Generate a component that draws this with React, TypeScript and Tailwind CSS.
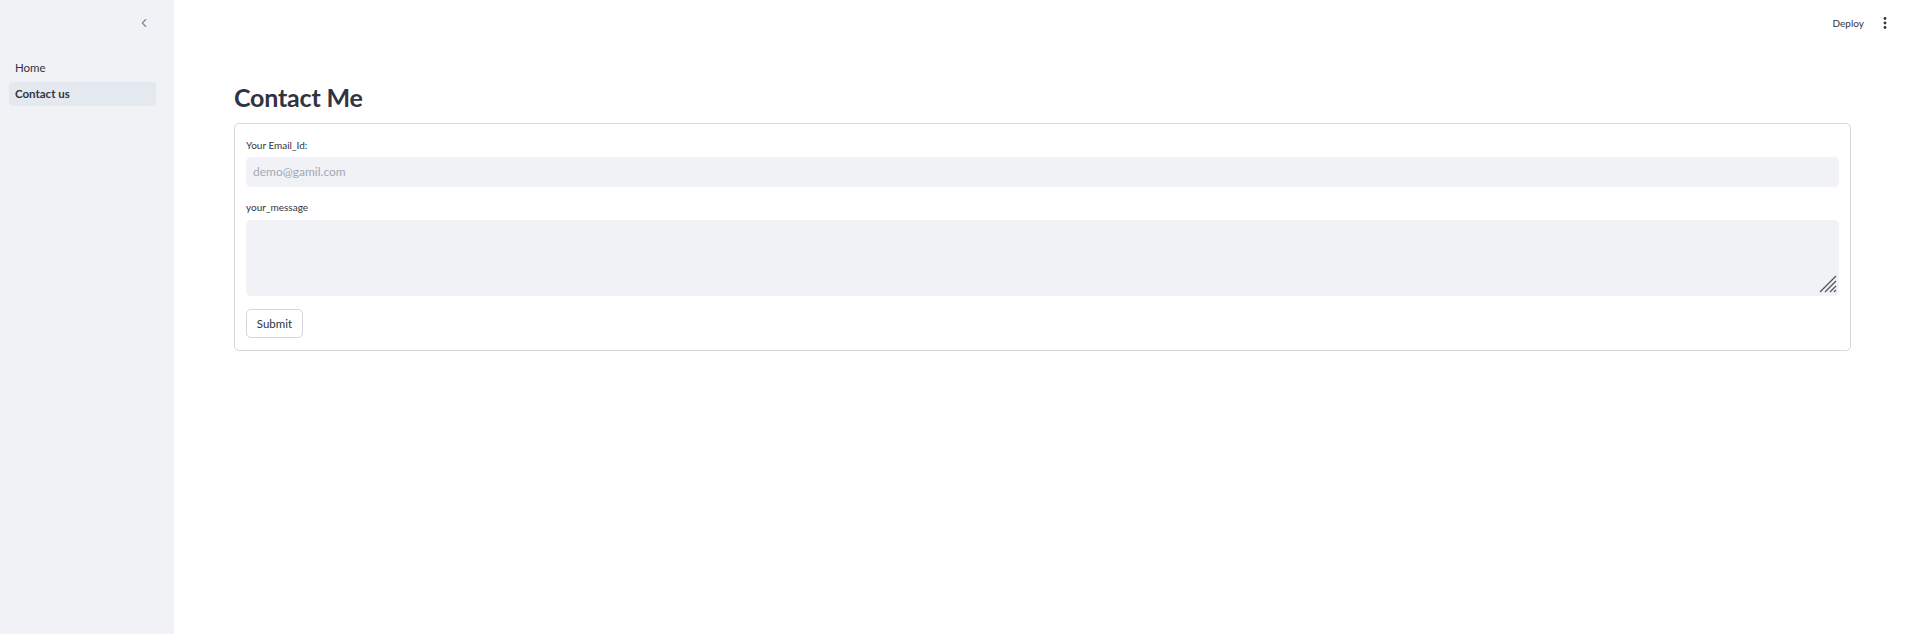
import { ChevronLeft } from "lucide-react";

const font = { fontFamily: '"Source Sans Pro", Lato, "Noto Sans", sans-serif' };

function Sidebar() {
  return (
    <aside className="flex w-[174px] shrink-0 flex-col bg-[#f0f2f6]">
      <div className="flex h-[46px] items-center justify-end pr-[23px]">
        <ChevronLeft className="h-[14px] w-[14px] text-[#808495]" strokeWidth={2} />
      </div>
      <nav className="mt-[10px] flex flex-col gap-[2px] pl-[9px] pr-[18px]">
        <a className="flex h-[24px] items-center rounded-[4px] px-[6px] text-[11.5px] text-[#31333f]">
          Home
        </a>
        <a className="flex h-[24px] items-center rounded-[4px] bg-[#e4e8ef] px-[6px] text-[11.5px] font-bold text-[#31333f]">
          Contact us
        </a>
      </nav>
    </aside>
  );
}

function Header() {
  return (
    <header className="flex h-[46px] items-center justify-end gap-[19px] pr-[22px]">
      <span className="text-[10px] text-[#31333f]">Deploy</span>
      <svg width="4" height="14" viewBox="0 0 4 14" className="text-[#31333f]">
        <circle cx="2" cy="2.5" r="1.4" fill="currentColor" />
        <circle cx="2" cy="7" r="1.4" fill="currentColor" />
        <circle cx="2" cy="11.5" r="1.4" fill="currentColor" />
      </svg>
    </header>
  );
}

function ResizeHandle() {
  return (
    <svg width="18" height="18" viewBox="0 0 18 18" className="absolute bottom-[3px] right-[2px] text-[#555]">
      <line x1="17" y1="1" x2="1" y2="17" stroke="currentColor" strokeWidth="1.2" />
      <line x1="17" y1="6" x2="6" y2="17" stroke="currentColor" strokeWidth="1.2" />
      <line x1="17" y1="11" x2="11" y2="17" stroke="currentColor" strokeWidth="1.2" />
      <line x1="17" y1="15" x2="15" y2="17" stroke="currentColor" strokeWidth="1.2" />
    </svg>
  );
}

function ContactForm() {
  return (
    <form className="flex flex-col rounded-[5px] border border-[#d6d6d9] px-[11px] pb-[12px] pt-[13px]">
      <label className="text-[10px] leading-[16px] text-[#31333f]">Your Email_Id:</label>
      <div className="mt-[4px] flex h-[30px] items-center rounded-[5px] bg-[#f0f2f6] px-[7px]">
        <span className="text-[12px] text-[#a3a8b4]">demo@gamil.com</span>
      </div>
      <label className="mt-[12px] text-[10px] leading-[16px] text-[#31333f]">your_message</label>
      <div className="relative mt-[5px] h-[76px] rounded-[5px] bg-[#f0f2f6]">
        <ResizeHandle />
      </div>
      <div className="mt-[13px]">
        <button
          type="button"
          className="h-[29px] w-[57px] rounded-[5px] border border-[#d6d6d9] bg-white text-[11.5px] text-[#31333f]"
        >
          Submit
        </button>
      </div>
    </form>
  );
}

export default function App() {
  return (
    <div className="flex h-[634px] w-full bg-white" style={font}>
      <Sidebar />
      <main className="flex flex-1 flex-col">
        <Header />
        <div className="pl-[60px] pr-[58px] pt-[34px]">
          <h1 className="mb-[9px] text-[25px] font-bold leading-[34px] tracking-[-0.2px] text-[#31333f]">
            Contact Me
          </h1>
          <ContactForm />
        </div>
      </main>
    </div>
  );
}
